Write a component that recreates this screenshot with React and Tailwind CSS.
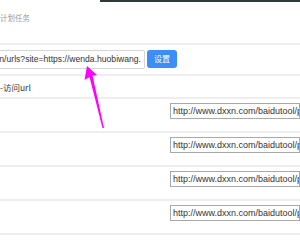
const rows = [1, 2, 3, 4];

const Arrow = () => (
  <svg className="absolute left-0 top-0" width="300" height="240" viewBox="0 0 300 240">
    <polygon points="87,66 97,75 92.5,75.5 104,128 102.5,128 89.5,77 84.5,80" fill="#ff00ff" />
  </svg>
);

export default function App() {
  return (
    <div className="relative w-[300px] h-[240px] overflow-hidden bg-white font-['Liberation_Sans','Noto_Sans_CJK_SC',sans-serif] text-[#333]">
      <div className="flex h-[2px]">
        <div className="w-[100px] bg-white" />
        <div className="flex-1 bg-[#2e3a3a]" />
      </div>
      <div className="h-[41px] pt-[11px] text-[7.5px] leading-[10px] text-[#999] font-['Noto_Sans_CJK_SC',sans-serif]">计划任务</div>
      <div className="h-[2px] bg-[#eeeeee]" />
      <div className="h-[29px] flex items-center gap-[2px] pb-[1px]">
        <div className="w-[145px] h-[19px] border border-[#d5d5d5] rounded-r-[2px] border-l-0 flex items-center justify-end overflow-hidden pr-[3px] text-[8.6px] whitespace-nowrap">
          n/urls?site=https://wenda.huobiwang.
        </div>
        <div className="w-[30px] h-[18px] rounded-[3px] bg-[#3c8df5] text-white text-[8px] flex items-center justify-center font-['Noto_Sans_CJK_SC',sans-serif]">设置</div>
      </div>
      <div className="h-[2px] bg-[#eeeeee]" />
      <div className="h-[21px] pt-[6px] text-[8.5px] leading-[10px] font-['Noto_Sans_CJK_SC',sans-serif]">-访问url</div>
      {rows.map((r) => (
        <div key={r} className="h-[34px] border-t-2 border-[#eeeeee] pt-[4px]">
          <div className="ml-[170px] h-[16px] border border-[#a9a9a9] pl-[2px] overflow-hidden whitespace-nowrap text-[9px] leading-[14px]">
            http://www.dxxn.com/baidutool/page
          </div>
        </div>
      ))}
      <div className="border-t-2 border-[#eeeeee]" />
      <Arrow />
    </div>
  );
}
